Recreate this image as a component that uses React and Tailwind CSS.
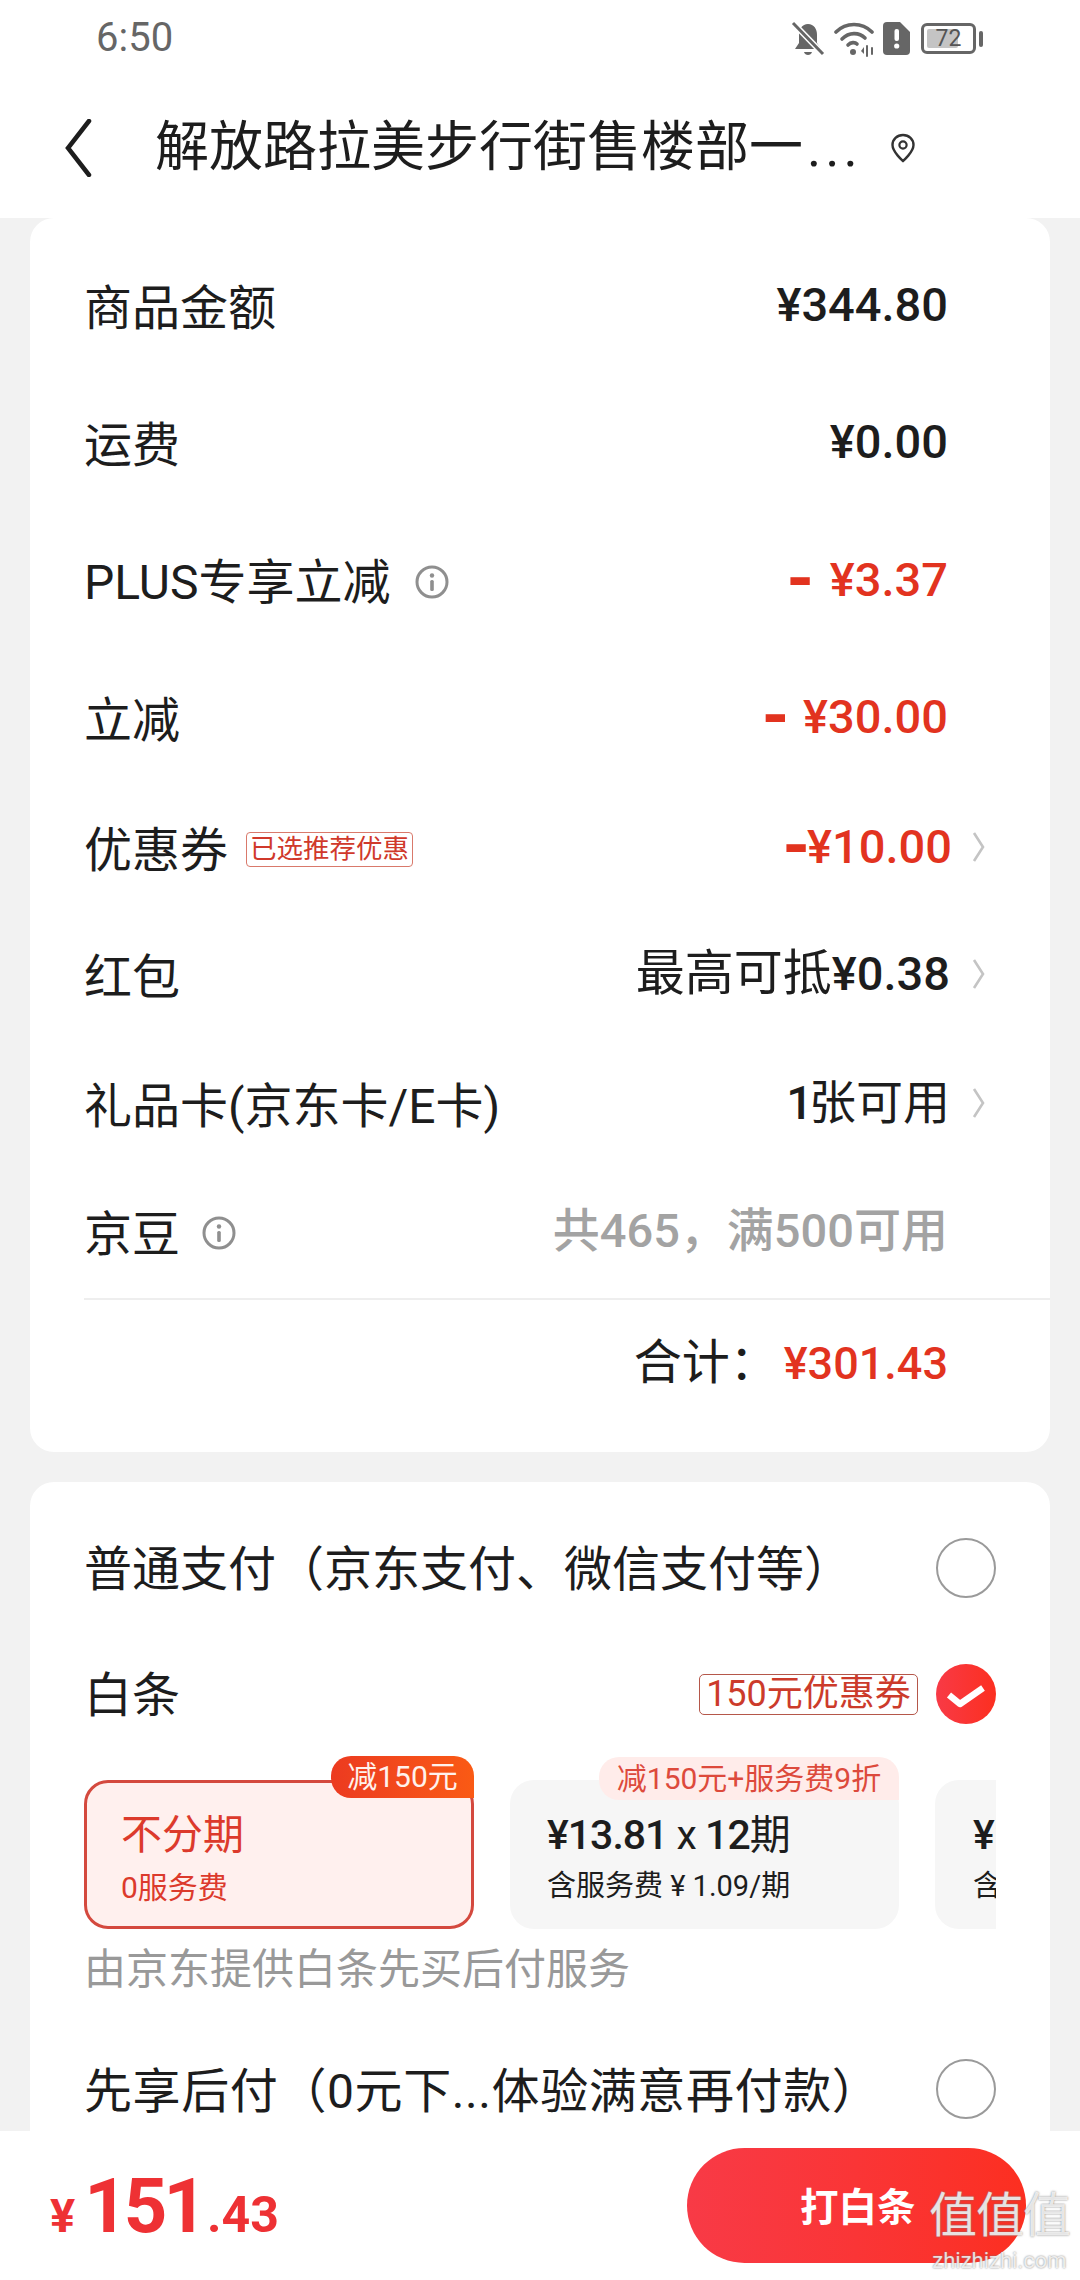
import React from "react";

const FONT = "font-['Roboto','Noto_Sans_CJK_SC',sans-serif]";

function Bell() {
  return (
    <svg viewBox="0 0 34 36" className="w-[34px] h-[36px]" fill="none">
      <path d="M17 3c-6 0-9 5-9 11v8l-4 6h26l-4-6v-8c0-6-3-11-9-11z" fill="#666" />
      <path d="M13 31h8c-1 4-7 4-8 0z" fill="#666" />
      <path d="M3 3l29 30" stroke="#fff" strokeWidth="6" />
      <path d="M2 2l30 31" stroke="#666" strokeWidth="3" />
    </svg>
  );
}

function Wifi() {
  return (
    <svg viewBox="0 0 40 36" className="w-[40px] h-[36px]" fill="none" stroke="#666" strokeWidth="3.6" strokeLinecap="round">
      <path d="M2 11C12 1 28 1 38 11" />
      <path d="M8 18C15 11 25 11 31 17" />
      <path d="M14 24c3-3 7-3 9-1" />
      <circle cx="19" cy="31" r="3" fill="#666" stroke="none" />
      <path d="M33 25v10M38 27v6" strokeWidth="2" />
      <path d="M27 30l3-4v7z" fill="#666" stroke="none" />
    </svg>
  );
}

function Sim() {
  return (
    <svg viewBox="0 0 27 33" className="w-[27px] h-[33px]">
      <path d="M4 0h13l10 10v19a4 4 0 0 1-4 4H4a4 4 0 0 1-4-4V4a4 4 0 0 1 4-4z" fill="#666" />
      <rect x="11.5" y="7" width="4.5" height="12" rx="2" fill="#fff" />
      <circle cx="13.7" cy="24" r="2.6" fill="#fff" />
    </svg>
  );
}

function Battery() {
  return (
    <div className="flex items-center gap-[3px]">
      <div className="relative w-[55px] h-[31px] rounded-[6px] border-[3px] border-[#666] p-[3px]">
        <div className="h-full w-[72%] rounded-[2px] bg-[#c4c4c4]" />
        <span className="absolute inset-0 flex items-center justify-center text-[23px] leading-none text-[#555]">72</span>
      </div>
      <div className="w-[4px] h-[16px] rounded-[2px] bg-[#666]" />
    </div>
  );
}

function Info() {
  return (
    <svg viewBox="0 0 34 34" className="w-[34px] h-[34px] shrink-0" fill="none">
      <circle cx="17" cy="17" r="15" stroke="#8f8f8f" strokeWidth="3" />
      <circle cx="17" cy="10.5" r="2.2" fill="#8f8f8f" />
      <rect x="15.2" y="15" width="3.6" height="11" rx="1.5" fill="#8f8f8f" />
    </svg>
  );
}

function Chevron() {
  return (
    <svg viewBox="0 0 14 32" className="w-[14px] h-[32px] shrink-0" fill="none">
      <path d="M2 2l9 14-9 14" stroke="#c4c4c4" strokeWidth="2.6" />
    </svg>
  );
}

function Row({ h, children }) {
  return <div className={`flex items-center justify-between ${h}`}>{children}</div>;
}

function Radio({ className = "" }) {
  return <div className={`w-[60px] h-[60px] shrink-0 rounded-full border-2 border-[#9a9a9a] ${className}`} />;
}

function Label({ children, className = "mt-[2px]" }) {
  return <span className={`text-[48px] leading-none text-[#1d1d1d] ${className}`}>{children}</span>;
}

function Amount({ children, red, className = "" }) {
  return (
    <span className={`text-[47px] leading-none font-medium ${red ? "text-[#e2331f]" : "text-[#1d1d1d]"} ${className}`}>
      {children}
    </span>
  );
}

// Heavier minus sign used in front of discount amounts
function Minus({ className = "" }) {
  return <span className={`text-[70px] leading-[0] font-bold align-[-7px] ${className}`}>-</span>;
}

export default function App() {
  return (
    <div className={`relative w-[1080px] h-[2280px] flex flex-col overflow-hidden bg-[#f2f2f2] ${FONT}`}>
      {/* status bar */}
      <div className="h-[75px] shrink-0 bg-white flex items-center pl-[96px] pr-[97px] justify-between">
        <span className="text-[40px] leading-none text-[#666]">6:50</span>
        <div className="flex items-center gap-[9px] pt-[2px]">
          <Bell />
          <Wifi />
          <Sim />
          <div className="ml-[2px]">
            <Battery />
          </div>
        </div>
      </div>

      {/* title bar */}
      <div className="h-[143px] shrink-0 bg-white flex items-center pt-[2px]">
        <svg viewBox="0 0 28 58" className="ml-[64px] w-[28px] h-[58px] shrink-0" fill="none">
          <path d="M25 2L4 29l21 27" stroke="#1d1d1d" strokeWidth="4.5" strokeLinecap="round" />
        </svg>
        <span className="ml-[63px] text-[54px] leading-none text-[#1d1d1d] whitespace-nowrap">
          解放路拉美步行街售楼部一<span className="ml-[4px] tracking-[4px]">...</span>
        </span>
        <svg viewBox="0 0 26 30" className="ml-[28px] w-[26px] h-[30px] shrink-0" fill="none">
          <path d="M13 2c-6 0-10.5 4.5-10.5 10C2.500 19 13 28 13 28s10.500-9 10.500-16C23.500 6.500 19 2 13 2z" stroke="#333" strokeWidth="2.4" />
          <circle cx="13" cy="12" r="3.600" stroke="#333" strokeWidth="2.2" />
        </svg>
      </div>

      {/* scrolling body */}
      <div className="flex-1 min-h-0 overflow-hidden px-[30px]">
        {/* price breakdown */}
        <div className="bg-white rounded-[24px] pl-[54px] h-[1234px]">
          <div className="pr-[102px] pt-[21px]">
            <Row h="h-[137px]">
              <Label>商品金额</Label>
              <Amount className="mb-[6px]">¥344.80</Amount>
            </Row>
            <Row h="h-[137px]">
              <Label>运费</Label>
              <Amount className="mb-[6px]">¥0.00</Amount>
            </Row>
            <Row h="h-[138px]">
              <span className="flex items-center gap-[24px]">
                <Label>PLUS专享立减</Label>
                <Info />
              </span>
              <Amount red className="mb-[6px]">
                <Minus className="mr-[4px]" /> ¥3.37
              </Amount>
            </Row>
            <Row h="h-[137px]">
              <Label>立减</Label>
              <Amount red className="mb-[6px]">
                <Minus className="mr-[2px]" /> ¥30.00
              </Amount>
            </Row>
          </div>
          <div className="pr-[64px]">
            <Row h="h-[123px]">
              <span className="flex items-center gap-[18px]">
                <Label>优惠券</Label>
                <span className="h-[35px] px-[3px] rounded-[4px] border border-[#d9796b] flex items-center text-[26.500px] leading-none text-[#d0392b]">已选推荐优惠</span>
              </span>
              <span className="flex items-center gap-[20px] mb-[6px]">
                <Amount red>
                  <Minus className="-mr-[3px]" />¥10.00
                </Amount>
                <Chevron />
              </span>
            </Row>
            <Row h="h-[131px]">
              <Label>红包</Label>
              <span className="flex items-center gap-[22px] mb-[6px]">
                <Amount>
                  <span className="font-normal text-[49px]">最高可抵</span>¥0.38
                </Amount>
                <Chevron />
              </span>
            </Row>
            <Row h="h-[127px]">
              <Label>礼品卡(京东卡/E卡)</Label>
              <span className="flex items-center gap-[22px] mb-[6px]">
                <Amount>
                  <span className="tracking-[-4px]">1</span>
                  <span className="font-normal">张可用</span>
                </Amount>
                <Chevron />
              </span>
            </Row>
          </div>
          <div className="pr-[102px]">
            <Row h="h-[128px]">
              <span className="flex items-center gap-[22px]">
                <Label className="mt-[4px]">京豆</Label>
                <Info />
              </span>
              <span className="mb-[6px] text-[47px] leading-none font-medium text-[#a3a3a3]">共465，满500可用</span>
            </Row>
          </div>
          <div className="h-[2px] bg-[#eeeeee] mt-[1px]" />
          <div className="h-[126px] pr-[102px] flex items-center justify-end">
            <span className="mr-[6px] text-[48px] leading-none text-[#1d1d1d]">合计：</span>
            <span className="text-[45px] leading-none font-medium text-[#e2331f]">¥301.43</span>
          </div>
        </div>

        {/* payment methods */}
        <div className="mt-[30px] bg-white rounded-t-[24px] pl-[54px] pr-[54px] h-[680px]">
          <Row h="h-[172px]">
            <Label className="mt-[4px]">普通支付（京东支付、微信支付等）</Label>
            <Radio />
          </Row>
          <Row h="h-[80px]">
            <Label className="mt-[4px]">白条</Label>
            <span className="flex items-center gap-[18px]">
              <span className="w-[219px] h-[41px] rounded-[5px] border border-[#b5574a] flex items-center justify-center text-[36px] leading-none text-[#cc3b2b]">150元优惠券</span>
              <svg viewBox="0 0 60 60" className="w-[60px] h-[60px] shrink-0">
                <defs>
                  <linearGradient id="tick" x1="0" y1="0" x2="1" y2="0">
                    <stop offset="0" stopColor="#f83a46" />
                    <stop offset="1" stopColor="#fc2f20" />
                  </linearGradient>
                </defs>
                <circle cx="30" cy="30" r="30" fill="url(#tick)" />
                <path d="M13 31l11 9 23-16" fill="none" stroke="#fff" strokeWidth="6.500" strokeLinejoin="round" />
              </svg>
            </span>
          </Row>

          {/* instalment plans */}
          <div className="flex gap-[36px] overflow-hidden pt-[46px] w-[912px]">
            <div className="relative w-[390px] h-[149px] shrink-0 rounded-[24px] border-[3px] border-[#d4493e] bg-[#fff0ee] pl-[34px] pt-[32px]">
              <div className="text-[41px] leading-none text-[#dc3a2c]">不分期</div>
              <div className="mt-[17px] text-[30px] leading-none text-[#dc3a2c]">0服务费</div>
              <span className="absolute right-[-3px] top-[-27px] w-[143px] h-[42px] rounded-t-[20px] rounded-bl-[20px] bg-gradient-to-r from-[#ec3a20] to-[#fa5a14] flex items-center justify-center text-[30px] leading-none text-[#fff1ec]">减150元</span>
            </div>
            <div className="relative w-[389px] h-[149px] shrink-0 rounded-[24px] bg-[#f6f6f6] pl-[37px] pt-[35px]">
              <div className="text-[41px] leading-none tracking-[-1px] text-[#1d1d1d]">
                <span className="font-medium">¥13.81</span> x <span className="font-medium">12</span>期
              </div>
              <div className="mt-[16px] text-[29px] leading-none text-[#1d1d1d]">含服务费 ¥ 1.09/期</div>
              <span className="absolute right-0 top-[-23px] w-[300px] h-[43px] rounded-t-[20px] rounded-bl-[20px] bg-[#ffecea] flex items-center justify-center text-[30px] leading-none text-[#dd4a3c]">减150元+服务费9折</span>
            </div>
            <div className="w-[390px] h-[149px] shrink-0 rounded-[24px] bg-[#f6f6f6] pl-[38px] pt-[35px]">
              <div className="text-[41px] leading-none font-medium text-[#1d1d1d]">¥27.10 x 6期</div>
              <div className="mt-[16px] text-[29px] leading-none text-[#1d1d1d]">含服务费 ¥ 1.09/期</div>
            </div>
          </div>

          <div className="mt-[20px] text-[42px] leading-none text-[#999]">由京东提供白条先买后付服务</div>

          <div className="mt-[68px] flex items-center justify-between">
            <Label className="tracking-[0.6px]">先享后付（0元下...体验满意再付款）</Label>
            <Radio className="mb-[5px]" />
          </div>
        </div>
      </div>

      {/* checkout bar */}
      <div className="absolute left-0 bottom-0 w-full h-[149px] bg-white flex items-center justify-between pl-[50px] pr-[54px]">
        <div className="flex items-baseline font-bold text-[#ee3134]">
          <span className="text-[47px] leading-none">¥</span>
          <span className="ml-[9px] text-[76px] leading-none tracking-[-4px]">151</span>
          <span className="ml-[4px] text-[50px] leading-none">.43</span>
        </div>
        <div className="w-[339px] h-[115px] rounded-full bg-gradient-to-r from-[#f83a46] to-[#fc2f20] flex items-center pl-[113px] pt-[6px] text-[38.500px] leading-none font-bold text-white">
          打白条
        </div>
      </div>

      {/* site watermark */}
      <div className="absolute right-[10px] bottom-[8px] flex flex-col items-center pointer-events-none">
        <span className="text-[48px] leading-none tracking-[-1px] text-white/80 [text-shadow:0_0_2px_#777]">值值值</span>
        <span className="mt-[10px] text-[22px] leading-none text-white/80 [text-shadow:0_0_2px_#777]">zhizhizhi.com</span>
      </div>
    </div>
  );
}
